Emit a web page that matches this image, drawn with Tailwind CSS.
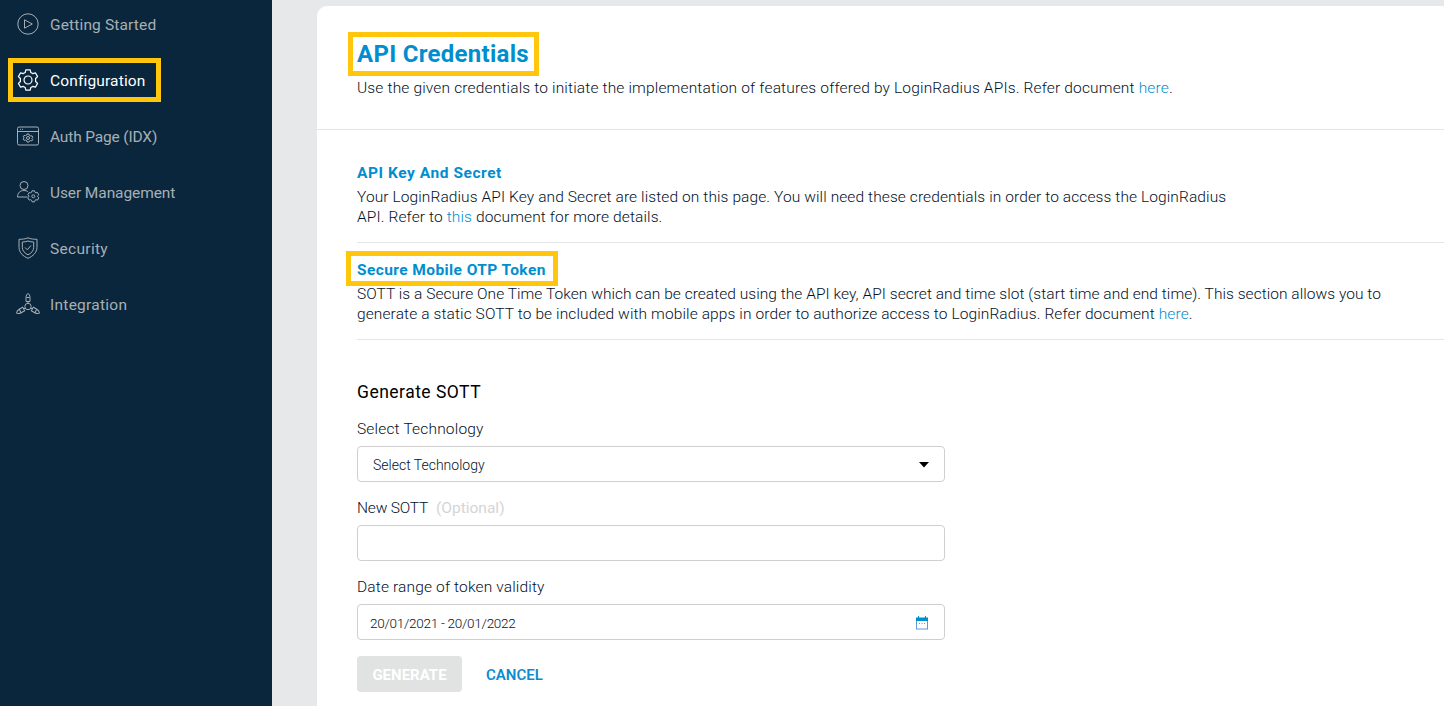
<!DOCTYPE html>
<html lang="en">
<head>
<meta charset="utf-8">
<title>API Credentials</title>
<script src="https://cdn.jsdelivr.net/npm/@tailwindcss/browser@4"></script>
</head>
<body class="flex h-[706px] w-[1444px] overflow-hidden bg-[#e7e8ea] font-[Roboto,sans-serif] text-[#04111f]">
<aside class="relative h-full w-[272px] shrink-0 bg-[#0a263c] text-[15.5px] leading-[24px] text-[#a7afb5]">
  <nav class="flex flex-col">
    <a class="flex h-[52px] items-center gap-[11px] pl-[17px] pb-[5px]">
      <svg class="size-[22px]" viewBox="0 0 22 22" fill="none" stroke="currentColor" stroke-linejoin="round"><circle cx="11" cy="11" r="10.2"/><path d="M7.5 6.8v8.4l7.8-4.2z"/></svg>
      <span class="pt-[3px] tracking-[0.14px]">Getting Started</span></a>
    <a class="flex h-[56px] items-center gap-[11px] pl-[17px] pb-px text-white">
      <svg class="size-[22px]" viewBox="0 0 22 22" fill="none" stroke="currentColor" stroke-width="1.2" stroke-linejoin="round"><circle cx="11" cy="11" r="4"/><path d="M8.8 .8h4.4l.6 2.7 1.9 1.1 2.7-.8 2.2 3.8-2 1.9v3l2 1.9-2.2 3.8-2.7-.8-1.900 1.100-.6 2.700H8.800l-.6-2.700-1.900-1.100-2.700.8-2.200-3.800 2-1.900v-3l-2-1.900 2.200-3.800 2.700.8 1.900-1.100z"/></svg>
      <span class="pt-[3px] tracking-[0.16px]">Configuration</span></a>
    <a class="flex h-[56px] items-center gap-[11px] pl-[17px] pb-px">
      <svg class="size-[22px]" viewBox="0 0 22 22" fill="none" stroke="currentColor"><rect x=".5" y="2" width="21" height="18" rx="1.5"/><path d="M.5 6.500h21M3 4.300h1M5 4.300h1"/><circle cx="11" cy="13" r="1.500"/><path d="M10 9h2l.4 1.500 1.300.5 1.300-.2.8 1.500-1 1 1 1-.8 1.500-1.500-.2-1.100.5L12 17h-2l-.4-1.500-1.300-.4-1.300.2-.8-1.500 1-.9-1-1 .8-1.500 1.500.2 1.100-.5z"/></svg>
      <span class="pt-[3px] tracking-[-0.16px]">Auth Page (IDX)</span></a>
    <a class="flex h-[56px] items-center gap-[11px] pl-[17px] pb-px">
      <svg class="size-[22px] overflow-visible" viewBox="0 0 22 22" fill="none" stroke="currentColor"><circle cx="7" cy="4.500" r="4"/><path d="M10.500 16H.5c0-4 2.500-6.500 6.500-6.500 1.500 0 2.700.3 3.800 1"/><circle cx="16.300" cy="15.300" r="1.500"/><path d="M15 9.800h2.600l.4 1.500 1 .6 1.500-.4 1.300 2.300-1.100 1v1l1.100 1-1.300 2.300-1.500-.4-1 .6-.4 1.500H15l-.4-1.500-1-.6-1.500.4-1.300-2.300 1.100-1v-1l-1.100-1 1.300-2.300 1.500.4 1-.6z"/></svg>
      <span class="pt-[3px] tracking-[-0.1px]">User Management</span></a>
    <a class="flex h-[56px] items-center gap-[11px] pl-[17px] pb-px">
      <svg class="size-[22px]" viewBox="0 0 22 22" fill="none" stroke="currentColor" stroke-linejoin="round"><path d="M11 .8c3 1.300 6 1.500 9 1.500v8c0 5-4 9-9 11-5-2-9-6-9-11v-8c3 0 6-.2 9-1.500z"/><path d="M11 4c2 .7 3.800 1 5.700 1v5.300c0 3.300-2.300 6-5.700 7.500-3.400-1.500-5.700-4.200-5.700-7.500V5c1.900 0 3.700-.3 5.700-1z"/><path d="m8 10.500 2.300 2.300L14 8.500"/></svg>
      <span class="pt-[3px] tracking-[0.31px]">Security</span></a>
    <a class="flex h-[56px] items-center gap-[11px] pl-[17px] pb-px">
      <svg class="size-[22px] overflow-visible" viewBox="0 0 22 22" fill="none" stroke="currentColor"><circle cx="11" cy="13.500" r="3.200"/><path id="arm" d="M11 10.300V8.500M9 8.500h4V4.500C13 2.500 12 1 11 .3 10 1 9 2.500 9 4.500zM9.500 4.500h3"/><use href="#arm" transform="rotate(120 11 13.500)"/><use href="#arm" transform="rotate(240 11 13.500)"/></svg>
      <span class="pt-[3px] tracking-[0.26px]">Integration</span></a>
  </nav>
  <div class="absolute left-[8px] top-[58px] h-[44px] w-[153px] border-5 border-[#ffc60b]"></div>
</aside>
<main class="relative ml-[45px] mt-[6px] h-[700px] flex-1 rounded-tl-[10px] bg-white text-[15.5px] font-light leading-[20px]">
  <header class="h-[124px] border-b border-[#e4e5e7] pl-[40px] pt-[32px]">
    <h1 class="h-[32px] text-[24px] font-bold leading-[32px] tracking-[0.28px] text-[#008ecf]">API Credentials</h1>
    <p class="mt-[8px] whitespace-nowrap tracking-[0.162px]">Use the given credentials to initiate the implementation of features offered by LoginRadius APIs. Refer document <a class="text-[#008ecf]">here</a>.</p>
  </header>
  <div class="pl-[40px]">
    <section class="h-[113px] whitespace-nowrap border-b border-[#e4e5e7] pt-[33px]">
      <h2 class="font-bold tracking-[0.55px] text-[#008ecf]">API Key And Secret</h2>
      <p class="mt-[4px] tracking-[0.1px]">Your LoginRadius API Key and Secret are listed on this page. You will need these credentials in order to access the LoginRadius<br><span class="tracking-[0.12px]">API. Refer to <a class="text-[#008ecf]">this</a> document for more details.</span></p>
    </section>
    <section class="h-[97px] whitespace-nowrap border-b border-[#e4e5e7] pt-[17px]">
      <h2 class="font-bold tracking-[0.41px] text-[#008ecf]">Secure Mobile OTP Token</h2>
      <p class="mt-[4px] tracking-[0.042px]">SOTT is a Secure One Time Token which can be created using the API key, API secret and time slot (start time and end time). This section allows you to<br><span class="tracking-[0.11px]">generate a static SOTT to be included with mobile apps in order to authorize access to LoginRadius. Refer document <a class="text-[#008ecf]">here</a>.</span></p>
    </section>
    <form class="w-[588px] pt-[40px]">
      <h3 class="text-[17.5px] font-normal leading-[24px] tracking-[0.48px] text-black">Generate SOTT</h3>
      <label class="mt-[15px] block tracking-[0.18px]">Select Technology</label>
      <div class="mt-[7px] flex h-[36px] items-center justify-between rounded-[4px] border border-[#cfcfcf] px-[15px] pt-px text-[14px]"><span>Select Technology</span>
        <svg class="h-[6px] w-[10px]" viewBox="0 0 10 6"><path d="M0 0h10L5 5.500z"/></svg></div>
      <label class="mt-[16px] block"><span class="tracking-[-0.2px]">New SOTT</span><span class="ml-[8px] font-normal text-[#d4d5d6]">(Optional)</span></label>
      <div class="mt-[7px] h-[36px] rounded-[4px] border border-[#cfcfcf]"></div>
      <label class="mt-[16px] block tracking-[0.15px]">Date range of token validity</label>
      <div class="mt-[7px] flex h-[36px] items-center justify-between rounded-[4px] border border-[#cfcfcf] pl-[12px] pr-[15px] pt-px text-[13.5px] tracking-[-0.27px]"><span>20/01/2021 - 20/01/2022</span>
        <svg class="h-[14px] w-[14px]" viewBox="0 0 14 14"><path d="M1 2h12v11.500H1z" fill="#5b9bd8"/><path d="M2 5h10v7.500H2z" fill="#fff"/><path d="M1 1.500h12V5H1zM3 0h1v2H3zM10 0h1v2h-1z" fill="#008ecf"/><path d="M4 7h1v1H4zM6.500 7h1v1h-1zM9 7h1v1H9z" fill="#5b9bd8"/></svg></div>
      <div class="mt-[16px] flex h-[36px] items-center gap-[24px] text-[15px]"><button class="h-[36px] w-[105px] rounded-[4px] bg-[#e0e3e2] pt-px font-bold text-white">GENERATE</button><span class="pt-px font-semibold text-[#0d8ad0]">CANCEL</span></div>
    </form>
  </div>
  <div class="absolute left-[31px] top-[26px] h-[44px] w-[191px] border-5 border-[#ffc60b]"></div>
  <div class="absolute left-[29px] top-[245px] h-[35px] w-[212px] border-5 border-[#ffc60b]"></div>
</main>
</body>
</html>
